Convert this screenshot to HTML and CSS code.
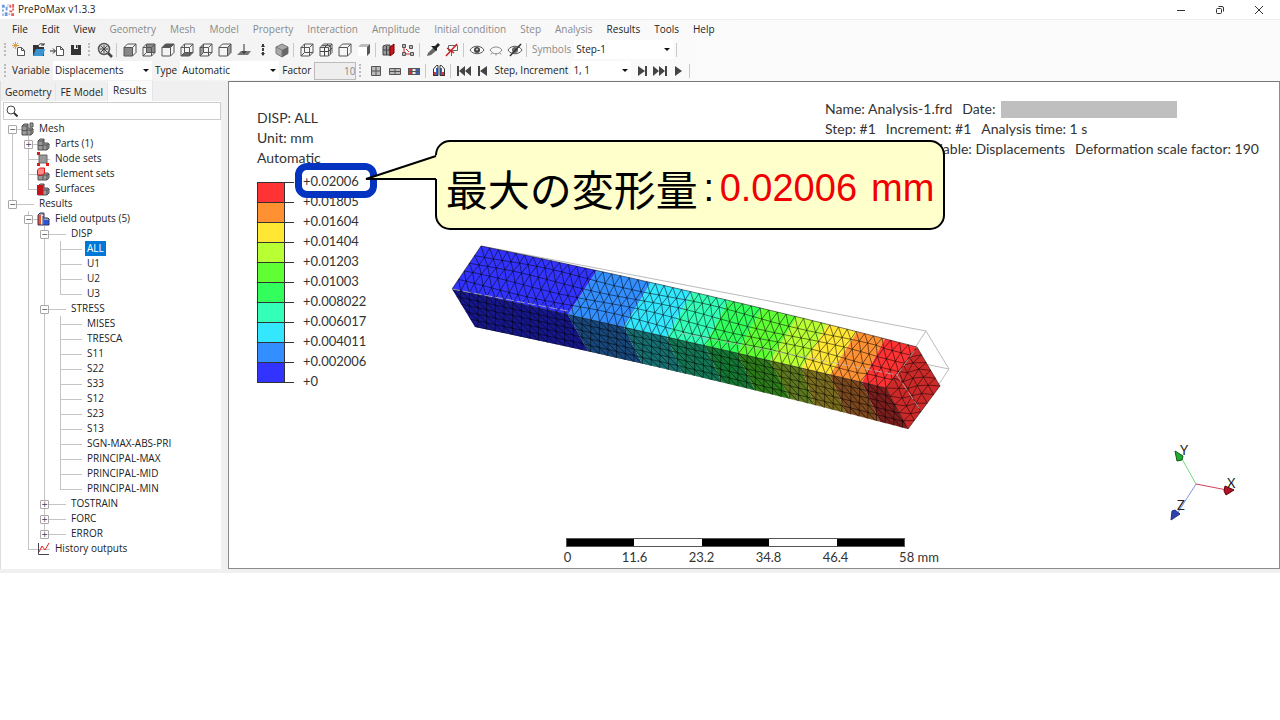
FILE: index.html
```html
<!DOCTYPE html>
<html lang="ja">
<head>
<meta charset="utf-8">
<title>PrePoMax v1.3.3</title>
<link rel="stylesheet" href="styles.css">
</head>
<body>
<svg class="defs" aria-hidden="true">
  <symbol id="cube" viewBox="0 0 16 16"><path d="M2 5.500h8.500v8.500H2zM2 5.500l3.500-3.500H14l-3.500 3.500M14 2v8.500L10.500 14M5.500 2v8.500H14M5.500 10.500L2 14" fill="none" stroke="#555"/></symbol>
  <symbol id="box" viewBox="0 0 16 16"><path d="M2 5.500h8.500V14H2zM2 5.500L5.500 2H14l-3.500 3.500M14 2v8.500L10.500 14" fill="none" stroke="#555"/></symbol>
  <symbol id="blocks" viewBox="0 0 14 14"><path d="M2 4l2-2h4v4h4l1 1v4l-2 2H2z" fill="#999" stroke="#555"/><path d="M2 4h5v9M7 8h4v5M7 4l1-2M11 8l2-1M2 8.500h5" fill="none" stroke="#555"/></symbol>
</svg>
<div class="app">
  <header class="titlebar">
    <svg class="logo" viewBox="0 0 15 15"><g fill="#6a9be0"><path d="M1 2h3v3H1zM1 7h2v2H1zM4 10h3v4H4zM5 4h2v4H5z"/></g><g fill="#e4605a"><path d="M9 2h2v3H9zM12 1h2v4h-2zM9 8h3v2H9zM11 11h3v3h-3zM12 6h2v2h-2z"/></g><path d="M1 11h2v3H1zM7 1h1v3H7zM8 11h2v2H8z" fill="#b6b8dc"/></svg>
    <h1>PrePoMax v1.3.3</h1>
    <div class="winctl">
      <button aria-label="Minimize"><svg viewBox="0 0 10 10"><path d="M1 5.500h8" stroke="#333" fill="none"/></svg></button>
      <button aria-label="Restore"><svg viewBox="0 0 10 10"><rect x="1.500" y="3.500" width="5" height="5" rx="1" stroke="#333" fill="none"/><path d="M3.500 1.500h3.500a1.500 1.500 0 0 1 1.500 1.500v3.500" stroke="#333" fill="none"/></svg></button>
      <button aria-label="Close"><svg viewBox="0 0 10 10"><path d="M1 1l8 8M9 1L1 9" stroke="#333" fill="none"/></svg></button>
    </div>
  </header>
  <nav class="menubar">
    <button>File</button><button>Edit</button><button>View</button><button disabled>Geometry</button><button disabled>Mesh</button><button disabled>Model</button><button disabled>Property</button><button disabled>Interaction</button><button disabled>Amplitude</button><button disabled>Initial condition</button><button disabled>Step</button><button disabled>Analysis</button><button>Results</button><button>Tools</button><button>Help</button>
  </nav>
  <div class="toolbar">
    <span class="grip"></span>
    <button aria-label="New"><svg viewBox="0 0 16 16"><path d="M5.500 5.500h4l3 3v5h-7zM9.500 5.500v3h3" fill="#fff" stroke="#555"/><path d="M3.500 0v7M0 3.500h7M1 1l5 5M6 1L1 6" stroke="#e0a050"/></svg></button>
    <button aria-label="Open"><svg viewBox="0 0 16 16"><path d="M2 3h5l1 2h5v9H2z" fill="#333"/><path d="M5 7h9l-2 7H2z" fill="#3c93d0"/><path d="M7 5c1-4 4-4 6-2V1M13 3h-3" stroke="#333" fill="none"/></svg></button>
    <button aria-label="Import"><svg viewBox="0 0 16 16"><path d="M6.500 4.500h4l3 3v6h-7zM10.500 4.500v3h3" fill="#fff" stroke="#555"/><path d="M0 9h5M3 6.500L5.500 9 3 11.500" stroke="#222" fill="none"/></svg></button>
    <button aria-label="Save"><svg viewBox="0 0 16 16"><path d="M2 3h10v10H2z" fill="#333"/><path d="M5 3h4v4H5z" fill="#eee"/><path d="M7 3h1.500v3H7z" fill="#333"/></svg></button>
    <span class="grip wide"></span>
    <button aria-label="Zoom to fit"><svg viewBox="0 0 16 16"><circle cx="7" cy="7" r="5.500" fill="#ddd" stroke="#555" stroke-width="1.500"/><path d="M11 11l4 4" stroke="#444" stroke-width="2.500"/><path d="M4 4l6 6M10 4l-6 6M7 3v8M3 7h8" stroke="#444"/></svg></button>
    <span class="sep"></span>
    <button aria-label="Front view"><svg viewBox="0 0 16 16"><path d="M2 5.500h8.500V14H2z" fill="#888"/><use href="#box"/></svg></button>
    <button aria-label="Back view"><svg viewBox="0 0 16 16"><path d="M5.500 2H14v8.500H5.500z" fill="#888"/><use href="#cube"/></svg></button>
    <button aria-label="Top view"><svg viewBox="0 0 16 16"><path d="M2 5.500L5.500 2H14l-3.500 3.500z" fill="#555"/><use href="#box"/></svg></button>
    <button aria-label="Bottom view"><svg viewBox="0 0 16 16"><path d="M2 14l3.500-3.500H14L10.500 14z" fill="#666"/><use href="#cube"/></svg></button>
    <button aria-label="Left view"><svg viewBox="0 0 16 16"><path d="M2 5.500L5.500 2v8.500L2 14z" fill="#999"/><use href="#cube"/></svg></button>
    <button aria-label="Right view"><svg viewBox="0 0 16 16"><path d="M10.500 5.500L14 2v8.500L10.500 14z" fill="#999"/><use href="#box"/></svg></button>
    <button aria-label="Normal view"><svg viewBox="0 0 16 16"><path d="M1 13l4-4h10l-3 4z" fill="#777"/><path d="M8 2v9M6 9l2 2.500L10 9" stroke="#333" fill="none"/></svg></button>
    <button aria-label="Vertical view"><svg viewBox="0 0 16 16"><path d="M8 2v12" stroke="#444" stroke-width="2" stroke-dasharray="3 1"/><path d="M6 5l2-3 2 3zM6 11l2 3 2-3z" fill="#333"/></svg></button>
    <button aria-label="Isometric view"><svg viewBox="0 0 16 16"><path d="M8 2l6 3v6.500L8 15l-6-3.500V5z" fill="#aaa" stroke="#777"/><path d="M8 8l6-3v6.500L8 15z" fill="#666"/><path d="M2 5l6 3v7" stroke="#777" fill="none"/></svg></button>
    <span class="sep"></span>
    <button aria-label="Wireframe"><svg viewBox="0 0 16 16"><use href="#cube"/></svg></button>
    <button aria-label="Element edges"><svg viewBox="0 0 16 16"><use href="#box"/><path d="M6.500 5.500V14M2 9.500h8.500L14 6M6.500 5.500L10 2M4 3.700h8.300v8.500" stroke="#444" fill="none"/></svg></button>
    <button aria-label="Model edges"><svg viewBox="0 0 16 16"><use href="#box"/></svg></button>
    <button aria-label="No edges"><svg viewBox="0 0 16 16"><path d="M2 5l3-3h9l-3 3z" fill="#bbb"/><path d="M2 5h9v9H2z" fill="#fff"/><path d="M11 5l3-3v9l-3 3z" fill="#555"/></svg></button>
    <span class="sep"></span>
    <button aria-label="Section view"><svg viewBox="0 0 16 16"><path d="M2 4l3-1h4v10H2z" fill="#999" stroke="#444"/><path d="M2 8h7M5.500 4v9" stroke="#444"/><path d="M9 5l4-3v9l-4 3z" fill="#c4161c" stroke="#700"/></svg></button>
    <button aria-label="Exploded view"><svg viewBox="0 0 16 16"><path d="M2.500 2.500h3v3h-3zM9.500 3.500h3v3h-3zM2.500 10.500h3v3h-3zM10.500 10.500h3v3h-3z" fill="#bbb" stroke="#555"/><path d="M6 7l3 3M4 6v4M6 12h4" stroke="#c22"/></svg></button>
    <span class="sep"></span>
    <button aria-label="Query"><svg viewBox="0 0 16 16"><path d="M2 14l1-3 6-6 3 3-6 5z" fill="#666"/><path d="M8 4h2l3-3 2 2-3 3v2l-1 1-5-5z" fill="#222"/></svg></button>
    <button aria-label="Remove annotations"><svg viewBox="0 0 16 16"><path d="M4.500 3.500h9v5h-9zM7.500 8v6" fill="none" stroke="#666"/><path d="M2 14L13 2M3 6l7 5" stroke="#d01c1c" stroke-width="1.500"/></svg></button>
    <span class="sep"></span>
    <button aria-label="Show"><svg viewBox="0 0 16 16"><path d="M1 8c3-5 11-5 14 0-3 5-11 5-14 0z" fill="#fff" stroke="#555"/><circle cx="8" cy="8" r="3" fill="#444"/><circle cx="8" cy="7.500" r="1" fill="#ddd"/></svg></button>
    <button aria-label="Hide"><svg viewBox="0 0 16 16"><path d="M2 8c3-4 9-4 12 0-3 5-9 5-12 0zM4 11l-1 1.500M8 12v1.500M12 11l1 1.500" fill="none" stroke="#888"/></svg></button>
    <button aria-label="Invert visibility"><svg viewBox="0 0 16 16"><path d="M1 8c3-5 11-5 14 0-3 5-11 5-14 0z" fill="#fff" stroke="#555"/><circle cx="8" cy="8" r="3" fill="#666"/><path d="M3 14L14 2" stroke="#333" stroke-width="1.500"/></svg></button>
    <span class="sep"></span>
    <label class="muted" for="symbols">Symbols</label>
    <span class="combo"><select id="symbols"><option>Step-1</option></select></span>
    <span class="sep"></span>
  </div>
  <div class="toolbar">
    <span class="grip"></span>
    <label for="variable">Variable</label>
    <span class="combo"><select id="variable"><option>Displacements</option></select></span>
    <label for="type">Type</label>
    <span class="combo"><select id="type"><option>Automatic</option></select></span>
    <label for="factor">Factor</label>
    <input id="factor" class="factor" type="text" value="10" disabled>
    <span class="grip wide"></span>
    <button aria-label="Undeformed"><svg viewBox="0 0 16 16"><path d="M3.500 3.500h9v9h-9zM3.500 8h9M8 3.500v9" fill="#bbb" stroke="#555"/></svg></button>
    <button aria-label="Deformed"><svg viewBox="0 0 16 16"><path d="M2.500 5.500h11v6h-11zM2.500 8.500h11M8 5.500v6" fill="#bbb" stroke="#555"/></svg></button>
    <button aria-label="Color contours"><svg viewBox="0 0 16 16"><path d="M2 5h4v7H2z" fill="#d33"/><path d="M6 5h4v7H6z" fill="#eee"/><path d="M10 5h4v7h-4z" fill="#36c"/><path d="M2.500 5.500h11v6h-11zM2.500 8.500h11M6 5.500v6M10 5.500v6" fill="none" stroke="#555"/></svg></button>
    <span class="sep"></span>
    <button aria-label="Transformation"><svg viewBox="0 0 16 16"><path d="M2 7l4-4v8H2z" fill="#fff"/><path d="M10 3l4 4v4h-4z" fill="#fff"/><path d="M2 9h3v4H2z" fill="#d33"/><path d="M11 9h3v4h-3z" fill="#d33"/><path d="M5 5h2v8H5zM9 5h2v8H9z" fill="#36c"/><path d="M2.500 12.500V6L5.500 2.500H7v10zM13.500 12.500V6l-3-3.500H9v10z" fill="none" stroke="#333"/></svg></button>
    <span class="sep"></span>
    <button aria-label="First increment"><svg viewBox="0 0 16 16"><path d="M1 3h2v10H1zM9 3v10L3 8zM15 3v10L9 8z" fill="#444"/></svg></button>
    <button aria-label="Previous increment"><svg viewBox="0 0 16 16"><path d="M3 3h2v10H3zM12 3v10L5 8z" fill="#444"/></svg></button>
    <label for="inc">Step, Increment</label>
    <span class="combo narrow"><select id="inc"><option>1, 1</option></select></span>
    <span class="play">
    <button aria-label="Next increment"><svg viewBox="0 0 16 16"><path d="M11 3h2v10h-2zM4 3v10l7-5z" fill="#444"/></svg></button>
    <button aria-label="Last increment"><svg viewBox="0 0 16 16"><path d="M13 3h2v10h-2zM1 3v10l6-5zM7 3v10l6-5z" fill="#444"/></svg></button>
    <button aria-label="Animate"><svg viewBox="0 0 16 16"><path d="M5 3v10l7-5z" fill="#444"/></svg></button>
    </span>
    <span class="sep"></span>
  </div>
  <main class="workspace">
    <aside class="side">
      <div class="tabs" role="tablist"><button role="tab">Geometry</button><button role="tab">FE Model</button><button role="tab" class="active" aria-selected="true">Results</button></div>
      <label class="search"><svg viewBox="0 0 12 12"><circle cx="5" cy="5" r="4" fill="none" stroke="#444"/><path d="M8 8l3.500 3.500" stroke="#333" stroke-width="2"/></svg><input type="text" aria-label="Search"></label>
      <ul class="tree">
        <li><div class="row"><button class="tog">−</button><svg viewBox="0 0 14 14"><use href="#blocks"/><path d="M10 1h3v4h-3z" fill="#999" stroke="#555"/></svg><span>Mesh</span></div>
          <ul>
            <li><div class="row"><button class="tog">+</button><svg viewBox="0 0 14 14"><use href="#blocks"/></svg><span>Parts (1)</span></div></li>
            <li><div class="row"><i></i><svg viewBox="0 0 14 14"><path d="M3 3h8v8H3z" fill="#999" stroke="#666"/><path d="M1 0h3v3H1zM1 11h3v3H1zM10 11h3v3h-3z" fill="#e01818"/></svg><span>Node sets</span></div></li>
            <li><div class="row"><i></i><svg viewBox="0 0 14 14"><use href="#blocks"/><path d="M1.500 3l2-2h5v5l-2 2h-5z" fill="#f88" stroke="#e01818"/></svg><span>Element sets</span></div></li>
            <li><div class="row"><i></i><svg viewBox="0 0 14 14"><use href="#blocks"/><path d="M1 3h6v10H1z" fill="#c8141c"/></svg><span>Surfaces</span></div></li>
          </ul>
        </li>
        <li><div class="row"><button class="tog">−</button><b></b><span>Results</span></div>
          <ul>
            <li><div class="row"><button class="tog">−</button><svg viewBox="0 0 14 14"><path d="M2 3l2-2h4v5h4l1 1v6H2z" fill="#9ab"/><path d="M2 3h3v10H2z" fill="#e55a28"/><path d="M5 3h2v10H5z" fill="#eee"/><path d="M8 8h5v5H8z" fill="#2858d8"/><path d="M2 3l2-2h4v5h4l1 1v6H2zM7 4v9" fill="none" stroke="#336"/></svg><span>Field outputs (5)</span></div>
              <ul>
                <li><div class="row"><button class="tog">−</button><b></b><span>DISP</span></div>
                  <ul>
                    <li><div class="row"><i></i><b></b><span class="sel">ALL</span></div></li>
                    <li><div class="row"><i></i><b></b><span>U1</span></div></li>
                    <li><div class="row"><i></i><b></b><span>U2</span></div></li>
                    <li><div class="row"><i></i><b></b><span>U3</span></div></li>
                  </ul>
                </li>
                <li><div class="row"><button class="tog">−</button><b></b><span>STRESS</span></div>
                  <ul>
                    <li><div class="row"><i></i><b></b><span>MISES</span></div></li>
                    <li><div class="row"><i></i><b></b><span>TRESCA</span></div></li>
                    <li><div class="row"><i></i><b></b><span>S11</span></div></li>
                    <li><div class="row"><i></i><b></b><span>S22</span></div></li>
                    <li><div class="row"><i></i><b></b><span>S33</span></div></li>
                    <li><div class="row"><i></i><b></b><span>S12</span></div></li>
                    <li><div class="row"><i></i><b></b><span>S23</span></div></li>
                    <li><div class="row"><i></i><b></b><span>S13</span></div></li>
                    <li><div class="row"><i></i><b></b><span>SGN-MAX-ABS-PRI</span></div></li>
                    <li><div class="row"><i></i><b></b><span>PRINCIPAL-MAX</span></div></li>
                    <li><div class="row"><i></i><b></b><span>PRINCIPAL-MID</span></div></li>
                    <li><div class="row"><i></i><b></b><span>PRINCIPAL-MIN</span></div></li>
                  </ul>
                </li>
                <li><div class="row"><button class="tog">+</button><b></b><span>TOSTRAIN</span></div></li>
                <li><div class="row"><button class="tog">+</button><b></b><span>FORC</span></div></li>
                <li><div class="row"><button class="tog">+</button><b></b><span>ERROR</span></div></li>
              </ul>
            </li>
            <li><div class="row"><i></i><svg viewBox="0 0 14 14"><path d="M2.500 1v11.500H13" fill="none" stroke="#445"/><path d="M3 10l3-6 3 4 4-7" fill="none" stroke="#e02020"/></svg><span>History outputs</span></div></li>
          </ul>
        </li>
      </ul>
    </aside>
    <section class="viewport">
      <svg class="model" width="520" height="200" viewBox="440 240 520 200" role="img" aria-label="Deformed beam"></svg>
      <div class="legend">
        <p>DISP: ALL</p><p>Unit: mm</p><p>Automatic</p>
        <div class="scale">
          <div class="bands"><i class="c9"></i><i class="c8"></i><i class="c7"></i><i class="c6"></i><i class="c5"></i><i class="c4"></i><i class="c3"></i><i class="c2"></i><i class="c1"></i><i class="c0"></i></div>
          <ol><li>+0.02006</li><li>+0.01805</li><li>+0.01604</li><li>+0.01404</li><li>+0.01203</li><li>+0.01003</li><li>+0.008022</li><li>+0.006017</li><li>+0.004011</li><li>+0.002006</li><li>+0</li></ol>
        </div>
      </div>
      <div class="info">
        <p><span>Name: Analysis-1.frd</span><span>Date:<i class="mask"></i></span></p>
        <p><span>Step: #1</span><span>Increment: #1</span><span>Analysis time: 1 s</span></p>
        <p class="end"><span>Variable: Displacements</span><span>Deformation scale factor: 190</span></p>
      </div>
      <div class="ruler">
        <div class="bar"><i></i><i></i><i></i><i></i><i></i></div>
        <div class="ticks"><span>0</span><span>11.6</span><span>23.2</span><span>34.8</span><span>46.4</span><span>58 mm</span></div>
      </div>
      <svg class="triad" width="80" height="84" viewBox="1160 440 80 84">
        <path d="M1196 484L1182 459" stroke="#6fe07a"/><path d="M1196 484L1227 490" stroke="#d0405a"/><path d="M1196 484L1177 514" stroke="#8492d8"/>
        <path d="M1175 451l8 5-1 4-5 1z" fill="#1cae2c" stroke="#145a1c"/><path d="M1225 486l9 4-8 5-2-4z" fill="#b0122c" stroke="#600"/><path d="M1171 520l1-9 3-1 5 4z" fill="#2c42b0" stroke="#223080"/>
        <text x="1180" y="455">Y</text><text x="1227" y="488">X</text><text x="1177" y="510">Z</text>
      </svg>
      <div class="mark"></div>
      <div class="callout">
        <svg class="tail" width="73" height="28" viewBox="0 0 73 28"><path d="M71 2L2 25H73V1z" fill="#ffffcc"/><path d="M72 2L2 25H72" fill="none" stroke="#000" stroke-width="2"/></svg>
        <span>最大の変形量</span><span class="colon">:</span><strong>0.02006</strong><strong class="unit">mm</strong>
      </div>
    </section>
  </main>
</div>
<script src="mesh.js"></script>
</body>
</html>
```
FILE: styles.css
```css
* { box-sizing: border-box; }
body { margin: 0; background: #fff; color: #222; font: 10px/15px "Open Sans", "Noto Sans", sans-serif; }
button, input, select { font: inherit; color: inherit; border: 0; margin: 0; padding: 0; background: none; }
p, ul, ol, h1 { margin: 0; padding: 0; list-style: none; }
svg { display: block; flex: none; }
.defs { position: absolute; width: 0; height: 0; }

.titlebar { display: flex; align-items: center; height: 19px; padding: 0 4px 0 1px; }
.logo { width: 14px; height: 14px; }
.titlebar h1 { margin-left: 3px; font-size: 10px; font-weight: 400; }
.winctl { display: flex; gap: 4px; margin-left: auto; }
.winctl button { display: grid; place-items: center; width: 35px; height: 18px; }
.winctl svg { width: 10px; height: 10px; }

.menubar, .toolbar { display: flex; align-items: center; background: linear-gradient(to right, #f1f1f1, #fbfbfb 60%); }
.menubar { height: 20px; gap: 14px; padding-left: 12px; border-top: 1px solid #eee; }
.menubar button { white-space: nowrap; }
.menubar button:disabled { color: #8a8a8a; }

.toolbar { height: 21px; gap: 3px; padding-left: 4px; }
.toolbar button, .toolbar svg { width: 16px; height: 16px; flex: none; }
.toolbar label { white-space: nowrap; }
.toolbar .muted { color: #8a8a8a; }
.grip { width: 5px; height: 13px; border-left: 2px dotted #bbb; }
.grip.wide { width: 6px; }
.sep { width: 3px; height: 14px; border-left: 1px solid #c8c8c8; }
.combo { position: relative; width: 99px; height: 19px; background: #fff; }
.combo select { width: 100%; height: 19px; padding-left: 2px; appearance: none; }
.combo::after { content: ""; position: absolute; right: 3px; top: 8px; border: 3px solid transparent; border-top-color: #111; border-bottom: 0; pointer-events: none; }
.combo.narrow { width: 60px; }
.factor { width: 42px; height: 18px; border: 1px solid #bbb; background: #eee; color: #888; text-align: right; }
.play { display: flex; gap: 2px; }

.workspace { display: flex; background: #f0f0f0; padding-bottom: 4px; }
.side { width: 221px; margin-right: 7px; border-left: 1px solid #ddd; background: #fff; padding-bottom: 13px; flex: none; }
.tabs { display: flex; background: #f0f0f0; height: 20px; align-items: flex-end; }
.tabs button { height: 18px; padding: 0 4px; border-right: 1px solid #e4e4e4; }
.tabs .active { height: 20px; background: #fafafa; padding: 0 5px 2px; }
.search { display: flex; align-items: center; gap: 4px; height: 18px; margin: 1px 0 1px 2px; padding-left: 2px; border: 1px solid #ccc; }
.search svg { width: 12px; height: 12px; }
.search input { flex: 1; min-width: 0; height: 14px; outline: 0; }
.tree { padding-left: 7px; }
.tree ul { padding-left: 16px; }
.tree li { position: relative; }
.tree li::before { content: ""; position: absolute; left: 4px; top: 0; bottom: 0; border-left: 1px solid #c4c4c4; }
.tree > li:first-child::before { top: 8px; }
.tree li:last-child::before { bottom: auto; height: 8px; }
.row { position: relative; display: flex; align-items: center; height: 15px; white-space: nowrap; }
.row::before { content: ""; position: absolute; left: 4px; top: 8px; width: 22px; border-top: 1px solid #c4c4c4; }
.row > * { position: relative; }
.row i, .tog { width: 9px; height: 9px; flex: none; }
.row .tog { border: 1px solid #a8a8a8; border-radius: 1px; background: #fff; color: #345; font: 8px/7px "DejaVu Sans", sans-serif; text-align: center; margin-top: 2px; }
.row svg, .row b { width: 14px; height: 14px; margin-left: 3px; flex: none; }
.row span { margin-left: 3px; padding: 0 2px; }
.row .sel { background: #0078d7; color: #fff; }

.viewport { position: relative; flex: 1; display: flex; justify-content: space-between; border: 1px solid #8c8c8c; border-top-color: #777; background: #fff; padding: 17px 20px 0 28px; font: 14px/20px Lato, "Open Sans", sans-serif; color: #333; }
.legend { padding-top: 9px; }
.scale { display: flex; padding-top: 3px; font-size: 13px; }
.bands { width: 29px; padding-top: 11px; }
.bands i { display: block; height: 20px; width: 28px; border: 1px solid #333; border-bottom: 0; }
.bands i:last-child { height: 21px; border-bottom: 1px solid #333; }
.scale ol li { position: relative; padding-left: 17px; }
.scale ol li::before { content: ""; position: absolute; left: -1px; top: 11px; width: 9px; border-top: 1px solid #333; }
.c9 { background: #ff3333; } .c8 { background: #ff9133; } .c7 { background: #ffe733; } .c6 { background: #b8ff33; } .c5 { background: #60ff33; }
.c4 { background: #33ff5c; } .c3 { background: #33ffb8; } .c2 { background: #33e7ff; } .c1 { background: #338fff; } .c0 { background: #3333ff; }
.info { width: 434px; }
.info p { display: flex; gap: 10px; white-space: nowrap; }
.info .end { justify-content: flex-end; }
.info p span { display: flex; align-items: center; }
.mask { width: 176px; height: 17px; margin-left: 6px; background: #bfbfbf; }

.model { position: absolute; left: 211px; top: 158px; }
.ruler { position: absolute; left: 337px; bottom: 1px; width: 339px; }
.bar { display: flex; height: 9px; border: 1px solid #555; }
.bar i { flex: 1; background: #000; }
.bar i:nth-child(even) { background: #fff; }
.ticks { display: flex; height: 20px; margin-left: -32px; margin-right: -64px; font-size: 13px; }
.ticks span { flex: 0 0 67px; display: flex; justify-content: center; white-space: nowrap; }
.ticks span:last-child { flex-basis: 100px; }
.triad { position: absolute; right: 39px; bottom: 44px; font-size: 13px; fill: #222; }

.mark { position: absolute; left: 66px; top: 81px; width: 82px; height: 35px; border: 7px solid #0433c0; border-radius: 12px; }
.callout { position: absolute; left: 206px; top: 58px; width: 510px; height: 90px; display: flex; align-items: center; justify-content: center; padding-top: 5px; border: 2px solid #000; border-radius: 15px; background: #ffffcc; color: #000; font: 38px/48px "Liberation Sans", "Noto Sans CJK JP", sans-serif; white-space: nowrap; }
.callout span { font-size: 42px; font-family: "Noto Sans CJK JP", sans-serif; }
.callout .colon { width: 22px; text-align: center; font-family: "Liberation Sans", sans-serif; font-size: 38px; }
.callout strong { font-weight: 400; color: #f00000; }
.callout .unit { margin-left: 14px; }
.tail { position: absolute; left: -73px; top: 12px; }
```
FILE: mesh.js
```js
(function () {
  const svg = document.querySelector('.model');
  const colors = ['#3333ff', '#338fff', '#33e7ff', '#33ffb8', '#33ff5c', '#60ff33', '#b8ff33', '#ffe733', '#ff9133', '#ff3333'];
  const dark = ['#17178c', '#18487c', '#167072', '#147655', '#147834', '#2c7a1a', '#5e7a1e', '#7a6c1e', '#7c481e', '#7c1e1e'];
  const edge = (x0, y0, x1, y1, bow) => t => [x0 + (x1 - x0) * t, y0 + (y1 - y0) * t - 4 * bow * t * (1 - t)];
  const back = edge(481, 246, 917, 347, 3);
  const ridge = edge(452, 289, 886, 388, 1);
  const base = edge(475, 327, 908, 429, 3);
  const backCuts = [481, 597, 651, 692, 728, 762, 797, 827, 857, 885, 917].map(x => (x - 481) / 436);
  const ridgeCuts = [452, 568, 624, 667, 705, 737, 770, 802, 830, 862, 886].map(x => (x - 452) / 434);
  const baseCuts = [475, 588, 642, 682, 722, 755, 790, 814, 846, 880, 908].map(x => (x - 475) / 433);
  const fmt = p => p[0].toFixed(1) + ' ' + p[1].toFixed(1);
  const mix = (a, b, s) => [a[0] + (b[0] - a[0]) * s, a[1] + (b[1] - a[1]) * s];
  let out = '<path d="M481 246L926 331L949 369L921 411M926 331L897 375M949 369L925 364" fill="none" stroke="#bbb"/>';

  function face(a, b, ca, cb, fills) {
    fills.forEach((fill, i) => {
      const pts = [];
      for (let k = 0; k <= 4; k++) pts.push(fmt(a(ca[i] + (ca[i + 1] - ca[i]) * k / 4)));
      for (let k = 4; k >= 0; k--) pts.push(fmt(b(cb[i] + (cb[i + 1] - cb[i]) * k / 4)));
      out += `<path d="M${pts.join('L')}Z" fill="${fill}"/>`;
    });
  }
  function grid(point, cols, rows, shift, width, opacity) {
    let d = '';
    const jitter = (i, j) => (j === 0 || j === rows || i <= 0 || i >= cols) ? 0 : shift * Math.sin(i * 12.9 + j * 7.3);
    const at = (i, j) => fmt(point((i + jitter(i, j)) / cols, (j + jitter(i + 3, j)) / rows));
    for (let j = 0; j <= rows; j++) for (let i = 0; i < cols; i++) d += `M${at(i, j)}L${at(i + 1, j)}`;
    for (let i = 0; i <= cols; i++) for (let j = 0; j < rows; j++) {
      d += `M${at(i, j)}L${at(i, j + 1)}`;
      if (i < cols) d += `M${at(i, j)}L${at(i + 1, j + 1)}`;
    }
    out += `<path d="${d}" fill="none" stroke="#000" stroke-width="${width}" opacity="${opacity}"/>`;
  }

  face(back, ridge, backCuts, ridgeCuts, colors);
  grid((t, s) => mix(back(t), ridge(t), s), 50, 5, 0.13, 0.8, 0.66);
  face(ridge, base, ridgeCuts, baseCuts, dark);
  out += '<clipPath id="front"><path d="M452 289Q669 336 886 388L908 429Q691 372 475 327Z"/></clipPath><g clip-path="url(#front)">';
  grid((t, s) => {
    const u = t * 1.06;
    const p = mix(ridge(u), base(u), s);
    return [p[0] - 23 * s, p[1] - 5 * s];
  }, 53, 5, 0, 0.8, 0.66);
  out += '</g><path d="M917 347L940 386L908 429L886 388Z" fill="#cc2929"/>';
  grid((t, s) => mix(mix([886, 388], [908, 429], t), mix([917, 347], [940, 386], t), s), 5, 5, 0.25, 0.7, 0.7);
  out += '<path d="M452 289L568 311M680 333L897 375L921 411M897 375L917 347" fill="none" stroke="#bbb" stroke-dasharray="8 3" opacity=".75"/>';
  svg.innerHTML = out;
})();
```
